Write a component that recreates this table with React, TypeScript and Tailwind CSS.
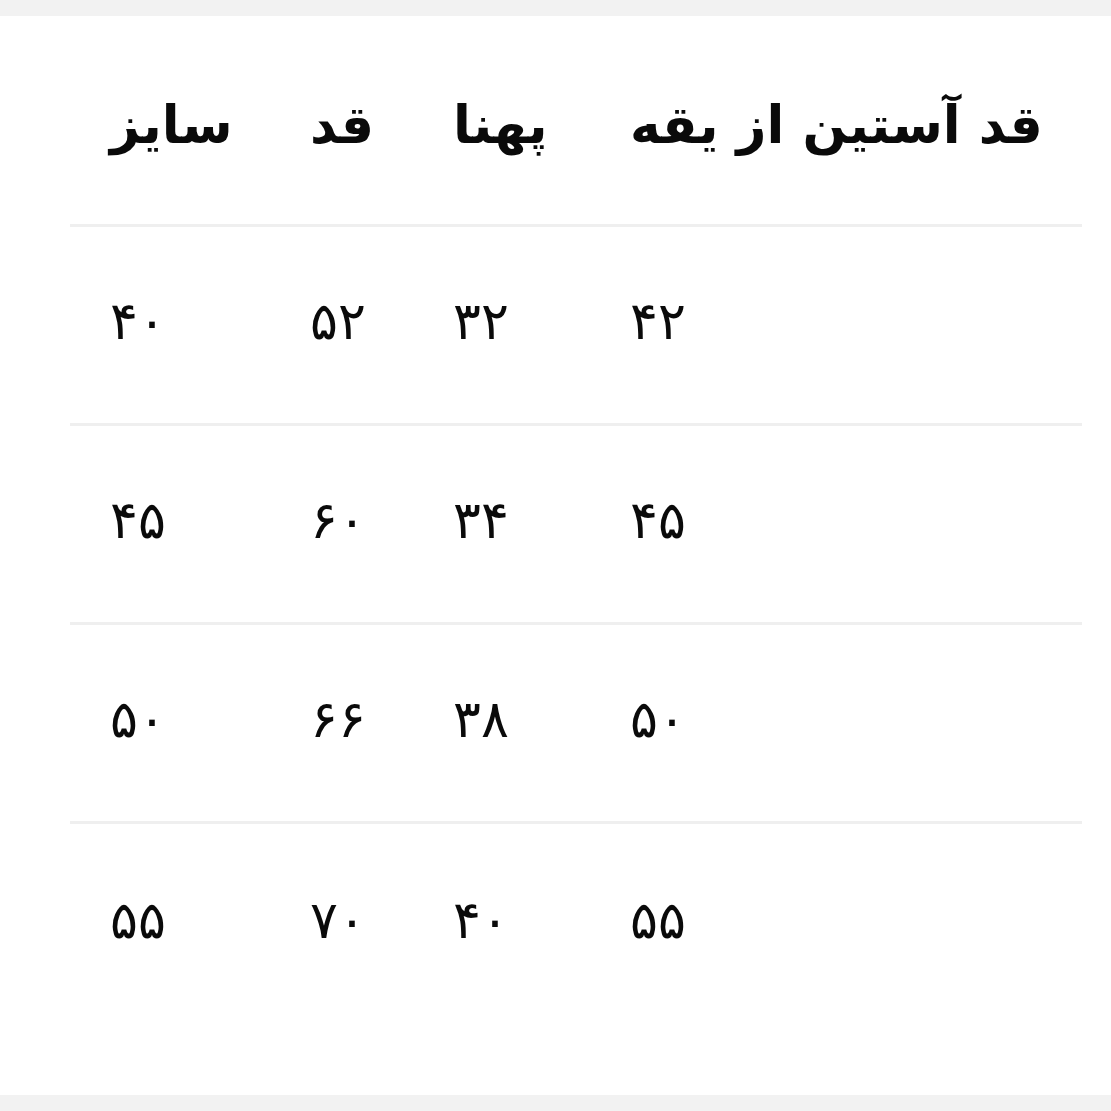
import React from 'react';

const headers = ['سایز', 'قد', 'پهنا', 'قد آستین از یقه'];

const rows = [
  ['۴۰', '۵۲', '۳۲', '۴۲'],
  ['۴۵', '۶۰', '۳۴', '۴۵'],
  ['۵۰', '۶۶', '۳۸', '۵۰'],
  ['۵۵', '۷۰', '۴۰', '۵۵'],
];

const cols = 'grid grid-cols-[200px_143px_177px_1fr] pl-[40px]';

export default function App() {
  return (
    <div className="min-h-screen bg-[#f2f2f2] pt-[16px] font-['DejaVu_Sans',sans-serif] text-[#0a0a0a]">
      <div className="h-[1079px] bg-white pl-[70px] pr-[29px]">
        {/* header */}
        <div className={`${cols} h-[211px] items-center pt-[10px] border-b-[3px] border-[#efefef]`}>
          {headers.map((h, i) => (
            <div key={i} className="text-[52px] font-bold leading-none">
              {h}
            </div>
          ))}
        </div>

        {/* size rows */}
        {rows.map((r, i) => (
          <div
            key={i}
            className={`${cols} h-[199px] items-center pb-[8px] ${i < rows.length - 1 ? 'border-b-[3px] border-[#efefef]' : ''}`}
          >
            {r.map((v, j) => (
              <div key={j} className="text-[52px] leading-none">
                {v}
              </div>
            ))}
          </div>
        ))}
      </div>
    </div>
  );
}
